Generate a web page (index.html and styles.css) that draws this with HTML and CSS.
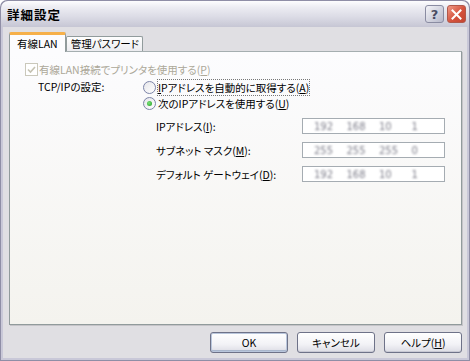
FILE: index.html
```html
<!DOCTYPE html>
<html lang="ja">
<head>
  <meta charset="UTF-8" />
  <title>詳細設定</title>
  <link rel="stylesheet" href="styles.css">
</head>
<body>

  <!-- Dialog window -->
  <div class="window">
    <div class="titlebar">
      <span class="title">詳細設定</span>
      <div class="caption-buttons">
        <span class="cbtn help">?</span>
        <span class="cbtn close">
          <svg width="11" height="11" viewBox="0 0 11 11"><path d="M1.5 1.5 L9.5 9.5 M9.5 1.5 L1.5 9.5" stroke="#fff" stroke-width="2" stroke-linecap="square"/></svg>
        </span>
      </div>
    </div>

    <div class="client">
      <!-- Tabs -->
      <div class="tabs">
        <div class="tab active">有線LAN</div>
        <div class="tab">管理パスワード</div>
      </div>

      <!-- Tab page -->
      <div class="panel">
        <div class="check-row disabled">
          <span class="checkbox">
            <svg width="9" height="9" viewBox="0 0 9 9"><path d="M1 4.5 L3.5 7 L8 2" fill="none" stroke="#c5c2b2" stroke-width="1.6"/></svg>
          </span>
          <span>有線LAN接続でプリンタを使用する(<u>P</u>)</span>
        </div>

        <div class="tcp">
          <div class="tcp-label">TCP/IPの設定:</div>
          <div class="tcp-options">
            <div class="radio-row">
              <span class="radio"></span>
              <span class="focus"><u>I</u>Pアドレスを自動的に取得する(<u>A</u>)</span>
            </div>
            <div class="radio-row">
              <span class="radio checked"></span>
              <span>次のIPアドレスを使用する(<u>U</u>)</span>
            </div>
          </div>
        </div>

        <div class="fields">
          <div class="field">
            <label>IPアドレス(<u>I</u>):</label>
            <div class="ipbox"><span>192</span><span>168</span><span>10</span><span>1</span></div>
          </div>
          <div class="field">
            <label>サブネット マスク(<u>M</u>):</label>
            <div class="ipbox"><span>255</span><span>255</span><span>255</span><span>0</span></div>
          </div>
          <div class="field">
            <label>デフォルト ゲートウェイ(<u>D</u>):</label>
            <div class="ipbox"><span>192</span><span>168</span><span>10</span><span>1</span></div>
          </div>
        </div>
      </div>

      <!-- Dialog buttons -->
      <div class="buttons">
        <button class="btn default">OK</button>
        <button class="btn">キャンセル</button>
        <button class="btn">ヘルプ(<u>H</u>)</button>
      </div>
    </div>
  </div>

</body>
</html>
```

FILE: styles.css
```css
* {
  box-sizing: border-box;
  margin: 0;
  padding: 0;
}

body {
  width: 470px;
  height: 361px;
  overflow: hidden;
  background: #fff;
  font-family: "Noto Sans CJK JP", "DejaVu Sans", sans-serif;
  font-size: 10.5px;
  font-feature-settings: "palt";
  color: #000;
}

u {
  text-decoration: underline;
  text-underline-offset: 1px;
}

.window {
  width: 470px;
  height: 361px;
  display: flex;
  flex-direction: column;
  background: #8f8ea6;
  border-radius: 7px 7px 0 0;
  padding: 0 1px 1px 1px;
}

.titlebar {
  height: 26px;
  display: flex;
  align-items: center;
  justify-content: space-between;
  padding: 0 3px 0 6px;
  border-radius: 7px 7px 0 0;
  margin-top: 1px;
  background: linear-gradient(#fdfdfe 0%, #ececf2 25%, #dcdce6 60%, #c6c6d4 100%);
}

.title {
  font-weight: bold;
  font-size: 12.5px;
  letter-spacing: 1px;
  color: #000;
}

.caption-buttons {
  display: flex;
  gap: 3px;
}

.cbtn {
  width: 19px;
  height: 18px;
  border-radius: 3px;
  display: flex;
  align-items: center;
  justify-content: center;
}

.help {
  border: 1px solid #8a8ca2;
  background: linear-gradient(135deg, #f4f4f8, #b6b8ca);
  color: #4a4c62;
  font-family: "DejaVu Sans", sans-serif;
  font-weight: bold;
  font-size: 13px;
}

.close {
  border: 1px solid #b1584a;
  background: linear-gradient(135deg, #f09a86, #d4523d 55%, #c44531);
}

.client {
  flex: 1;
  display: flex;
  flex-direction: column;
  background: #e0dfe3;
  border: 2px solid #c9c8d8;
  border-top: none;
  padding: 5px 5px 5px 6px;
}

/* tabs */
.tabs {
  display: flex;
  align-items: flex-end;
  height: 19px;
}

.tab {
  height: 15px;
  padding: 0 3px 0 4px;
  line-height: 14px;
  border: 1px solid #919b9c;
  border-bottom: none;
  border-radius: 2px 2px 0 0;
  background: linear-gradient(#fefefe, #ececf0);
}

.tab.active {
  height: 20px;
  margin-bottom: -1px;
  padding: 0 7px 0 7px;
  line-height: 17px;
  border-top: 3px solid #f6b04a;
  background: #fcfcfe;
  position: relative;
  z-index: 1;
}

/* tab page */
.panel {
  flex: 1;
  border: 1px solid #919b9c;
  border-top-color: #a5aeb0;
  background: linear-gradient(#fcfcfe, #f4f3ee);
  padding: 10px 0 0 15px;
  box-shadow: 1px 1px 0 #c5c4c8;
}

.check-row {
  display: flex;
  align-items: center;
  height: 14px;
  gap: 1px;
}

.check-row.disabled {
  color: #aca899;
}

.checkbox {
  width: 13px;
  height: 13px;
  border: 1px solid #cac8bb;
  background: #fff;
  display: flex;
  align-items: center;
  justify-content: center;
}

.tcp {
  display: flex;
  margin-top: 4px;
  padding-left: 13px;
}

.tcp-label {
  width: 105px;
  height: 14px;
  line-height: 14px;
}

.tcp-options {
  display: flex;
  flex-direction: column;
  gap: 2px;
}

.radio-row {
  display: flex;
  align-items: center;
  height: 14px;
  gap: 2px;
}

.radio {
  width: 13px;
  height: 13px;
  border-radius: 50%;
  border: 1px solid #7c84a8;
  background: linear-gradient(135deg, #e6e6ea, #fff);
  display: flex;
  align-items: center;
  justify-content: center;
}

.radio.checked::after {
  content: '';
  width: 5px;
  height: 5px;
  border-radius: 50%;
  background: radial-gradient(circle at 40% 40%, #7ce37c, #1d9a1d);
}

.focus {
  outline: 1px dotted #777;
  outline-offset: 0;
}

.fields {
  display: flex;
  flex-direction: column;
  gap: 8px;
  margin-top: 8px;
  padding-left: 131px;
}

.field {
  display: flex;
  align-items: center;
  height: 16px;
}

.field label {
  width: 146px;
}

.ipbox {
  width: 143px;
  height: 16px;
  border: 1px solid #a5acb2;
  background: #fff;
  display: flex;
  align-items: center;
  padding-left: 11px;
}

.ipbox span {
  width: 35px;
  color: #7e7e8a;
  font-family: "DejaVu Sans", sans-serif;
  font-size: 10px;
  filter: blur(1.2px);
}

/* buttons */
.buttons {
  display: flex;
  justify-content: flex-end;
  gap: 9px;
  padding-top: 7px;
}

.btn {
  width: 78px;
  height: 21px;
  font-family: "Noto Sans CJK JP", "DejaVu Sans", sans-serif;
  font-size: 10.5px;
  font-feature-settings: "palt";
  color: #000;
  border: 1px solid #6e7288;
  border-radius: 3px;
  background: linear-gradient(#ffffff, #f2f2f6 60%, #dcdce4);
  box-shadow: inset 0 -1px 0 #c9c9d4;
}

.btn.default {
  box-shadow: inset 0 0 0 1px #b9c6dc, inset 0 -2px 0 #a9b6cc;
}
```
